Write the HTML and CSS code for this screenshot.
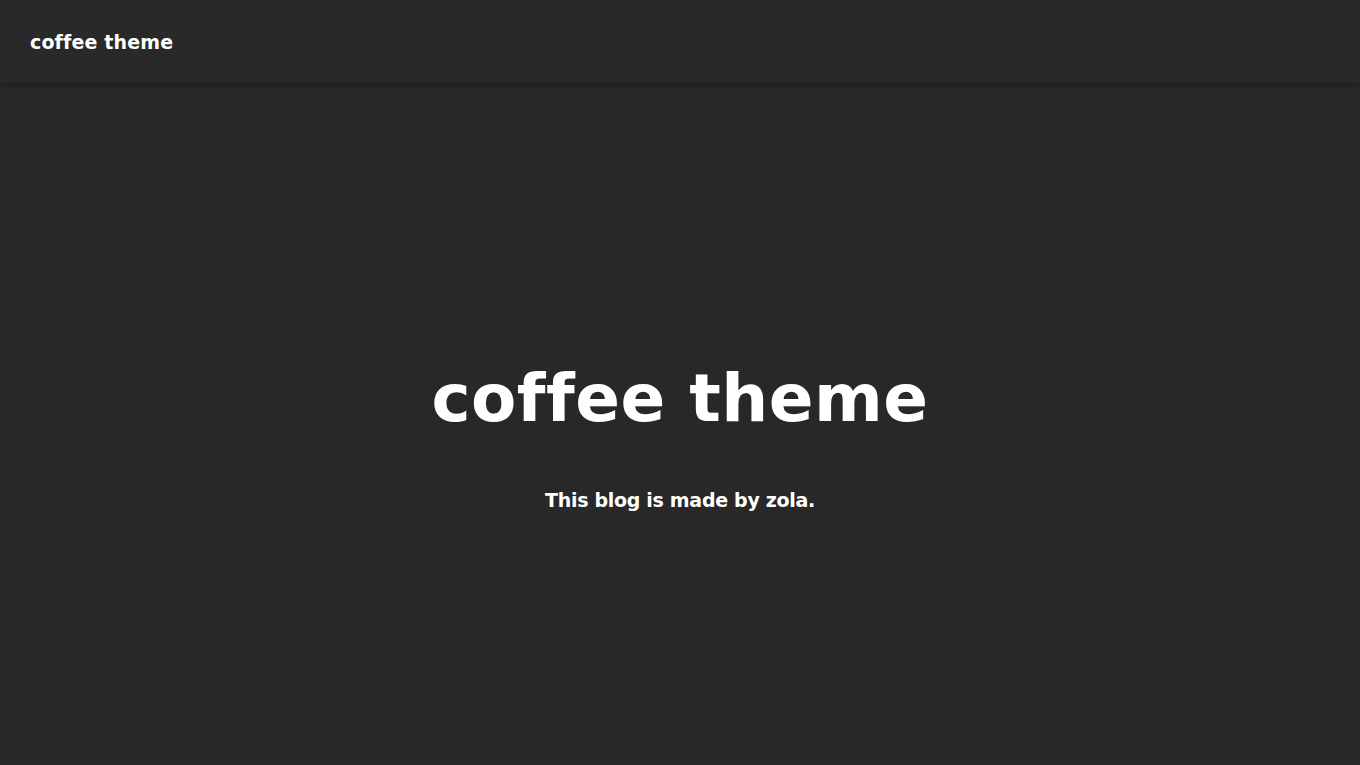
FILE: index.html
```html
<!DOCTYPE html>
<html lang="en">
<head>
<meta charset="utf-8">
<title>coffee theme</title>
<link rel="stylesheet" href="styles.css">
</head>
<body>
<header class="site-header">
  <a class="brand" href="#">coffee theme</a>
</header>
<main class="hero">
  <h1 class="hero-title">coffee theme</h1>
  <p class="hero-sub">This blog is made by zola.</p>
</main>
</body>
</html>
```
FILE: styles.css
```css
html, body {
  margin: 0;
  padding: 0;
  height: 100%;
}
body {
  background: #282828;
  color: #ffffff;
  font-family: "DejaVu Sans", sans-serif;
  overflow: hidden;
}
.site-header {
  height: 83px;
  background: #292929;
  box-shadow: 0 2px 6px rgba(0,0,0,0.35);
  display: flex;
  align-items: center;
  padding-left: 30px;
  position: relative;
  z-index: 1;
}
.brand {
  color: #ffffff;
  text-decoration: none;
  font-weight: bold;
  font-size: 19px;
  letter-spacing: 0.15px;
}
.hero {
  display: flex;
  flex-direction: column;
  align-items: center;
  padding-top: 276px;
}
.hero-title {
  margin: 0;
  font-size: 66px;
  font-weight: bold;
  line-height: 80px;
  letter-spacing: 0.5px;
}
.hero-sub {
  margin: 47px 0 0;
  font-size: 19px;
  font-weight: bold;
  line-height: 28px;
  letter-spacing: -0.3px;
}
```
